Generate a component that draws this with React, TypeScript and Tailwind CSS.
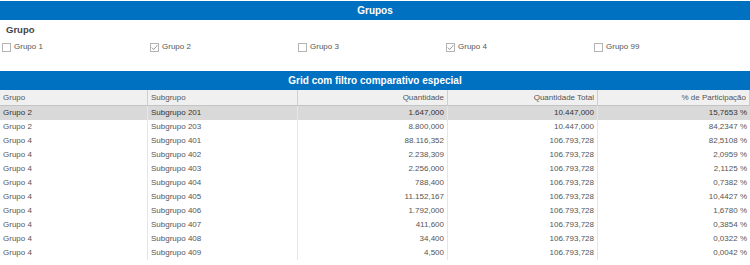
import React from 'react';

const grupos = [
  { label: 'Grupo 1', checked: false },
  { label: 'Grupo 2', checked: true },
  { label: 'Grupo 3', checked: false },
  { label: 'Grupo 4', checked: true },
  { label: 'Grupo 99', checked: false },
];

const rows = [
  ['Grupo 2', 'Subgrupo 201', '1.647,000', '10.447,000', '15,7653 %'],
  ['Grupo 2', 'Subgrupo 203', '8.800,000', '10.447,000', '84,2347 %'],
  ['Grupo 4', 'Subgrupo 401', '88.116,352', '106.793,728', '82,5108 %'],
  ['Grupo 4', 'Subgrupo 402', '2.238,309', '106.793,728', '2,0959 %'],
  ['Grupo 4', 'Subgrupo 403', '2.256,000', '106.793,728', '2,1125 %'],
  ['Grupo 4', 'Subgrupo 404', '788,400', '106.793,728', '0,7382 %'],
  ['Grupo 4', 'Subgrupo 405', '11.152,167', '106.793,728', '10,4427 %'],
  ['Grupo 4', 'Subgrupo 406', '1.792,000', '106.793,728', '1,6780 %'],
  ['Grupo 4', 'Subgrupo 407', '411,600', '106.793,728', '0,3854 %'],
  ['Grupo 4', 'Subgrupo 408', '34,400', '106.793,728', '0,0322 %'],
  ['Grupo 4', 'Subgrupo 409', '4,500', '106.793,728', '0,0042 %'],
];

const cols = 'grid grid-cols-[148px_150px_150px_150px_1fr]';

function Checkbox({ checked }: { checked: boolean }) {
  return (
    <span className="flex h-[9px] w-[9px] items-center justify-center border border-[#b4b4b4] bg-white">
      {checked && (
        <svg width="7" height="7" viewBox="0 0 7 7" fill="none">
          <path d="M0.8 3.6 L2.7 5.6 L6.3 1.2" stroke="#8a8a8a" strokeWidth="0.9" />
        </svg>
      )}
    </span>
  );
}

function TitleBar({ children }: { children: React.ReactNode }) {
  return (
    <div className="flex h-[19px] items-center justify-center bg-[#0070c0] text-[10px] font-bold text-white">
      {children}
    </div>
  );
}

export default function App() {
  return (
    <div className="w-[750px] h-[265px] overflow-hidden bg-white pt-px font-['Liberation_Sans',Arial,sans-serif] text-[8px] text-[#555]">
      <TitleBar>Grupos</TitleBar>
      <div className="h-[51px] pt-[4px]">
        <div className="pl-[6px] text-[9.5px] font-bold leading-[12px] text-[#444]">Grupo</div>
        <div className="mt-[6px] grid grid-cols-[148px_148px_148px_148px_1fr] pl-[2px]">
          {grupos.map((g) => (
            <label key={g.label} className="flex items-center gap-[3px] leading-[10px]">
              <Checkbox checked={g.checked} />
              <span>{g.label}</span>
            </label>
          ))}
        </div>
      </div>
      <TitleBar>Grid com filtro comparativo especial</TitleBar>
      <div className={`${cols} h-[16px] items-stretch border-b border-[#c4c4c4] bg-[#f0f0f0]`}>
        {['Grupo', 'Subgrupo', 'Quantidade', 'Quantidade Total', '% de Participação'].map((h, i) => (
          <div
            key={h}
            className={`flex items-center border-r border-[#cfcfcf] px-[3px] ${i >= 2 ? 'justify-end' : ''}`}
          >
            {h}
          </div>
        ))}
      </div>
      {rows.map((r, ri) => (
        <div
          key={r[1]}
          className={`${cols} h-[14px] ${ri === 0 ? 'bg-[#d9d9d9] text-[#333]' : ''}`}
        >
          {r.map((c, i) => (
            <div
              key={i}
              className={`flex items-center px-[3px] ${i < 4 ? 'border-r border-[#e6e6e6]' : ''} ${i >= 2 ? 'justify-end' : ''}`}
            >
              {c}
            </div>
          ))}
        </div>
      ))}
    </div>
  );
}
